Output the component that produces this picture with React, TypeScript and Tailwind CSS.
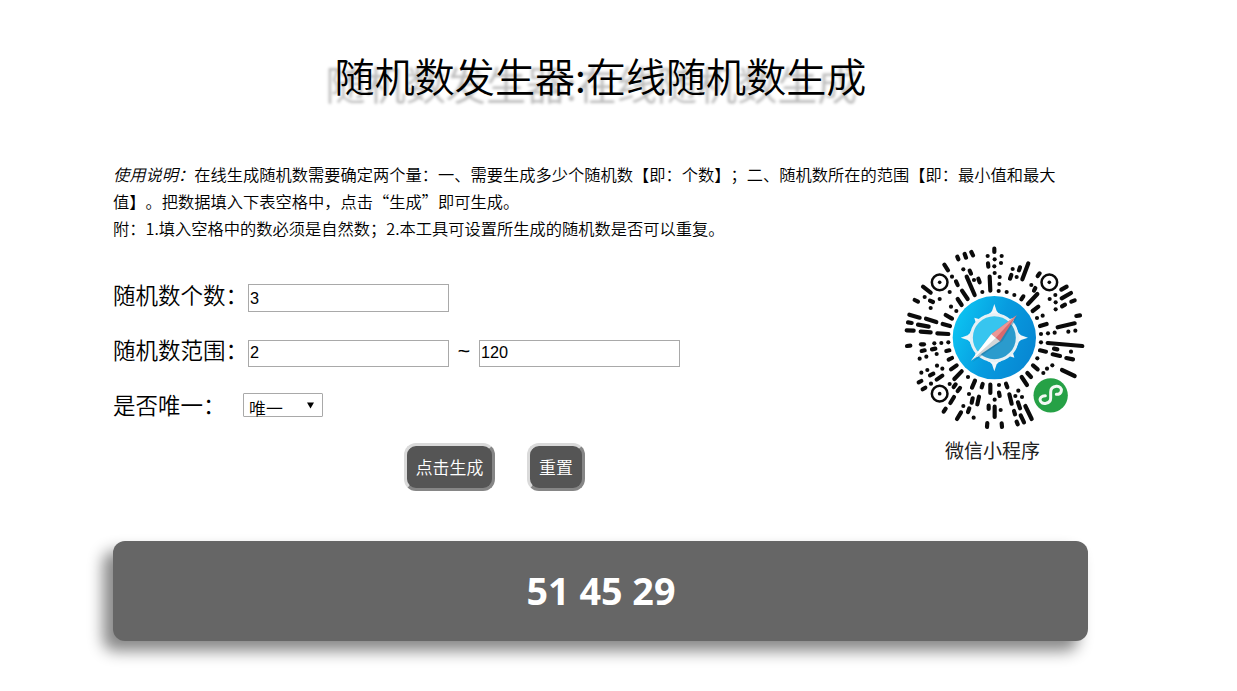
type Seg = [number, number, number, number];
type Dot = [number, number];

interface Quadrant {
  dx: number;
  dy: number;
  segs: Seg[];
  dots: Dot[];
}

const quadrants: Quadrant[] = [
  {
    dx: 15,
    dy: 0,
    segs: [
      [172, 50, 175, 58], [194, 42, 198, 53], [214, 36, 219, 46], [133, 74, 144, 91],
      [168, 124, 173, 135], [209, 92, 213, 101], [200, 110, 224, 165], [235, 116, 239, 127],
      [173, 177, 185, 195], [186, 152, 203, 177], [269, 110, 271, 152], [264, 70, 265, 80],
      [69, 140, 92, 158], [44, 180, 54, 185], [90, 182, 99, 186], [137, 225, 156, 236],
      [128, 252, 150, 258], [28, 224, 59, 233], [78, 236, 109, 246], [24, 247, 35, 249],
      [54, 254, 86, 260], [20, 271, 41, 272], [62, 275, 92, 277], [112, 280, 145, 282],
    ],
    dots: [
      [156, 110], [190, 88], [222, 120], [149, 156], [247, 156], [263, 48], [74, 171],
      [119, 177], [92, 204], [153, 200], [169, 213],
    ],
  },
  {
    dx: 285,
    dy: 0,
    segs: [
      [13, 26, 13, 36], [90, 82, 87, 91], [115, 70, 97, 118], [64, 105, 60, 116],
      [149, 100, 143, 108], [136, 144, 132, 152], [100, 169, 94, 178], [142, 162, 114, 192],
      [145, 200, 128, 213], [170, 252, 150, 258], [254, 250, 203, 262], [259, 228, 270, 226],
      [214, 149, 230, 140], [215, 175, 243, 159], [216, 199, 225, 194], [244, 185, 254, 181],
    ],
    dots: [
      [35, 48], [33, 69], [14, 58], [13, 79], [14, 99], [29, 111], [28, 132], [26, 153],
      [50, 156], [73, 165], [68, 87], [80, 111], [124, 135], [158, 227], [141, 234],
      [235, 275], [256, 272], [153, 282], [174, 280], [194, 278], [179, 177], [196, 165],
      [197, 187], [197, 208],
    ],
  },
  {
    dx: 15,
    dy: 285,
    segs: [
      [21, 33, 31, 32], [63, 28, 72, 28], [65, 48, 74, 46], [96, 43, 106, 41],
      [139, 48, 148, 46], [146, 74, 156, 69], [90, 121, 100, 116], [110, 134, 127, 122],
      [153, 103, 170, 91], [163, 132, 185, 109], [56, 142, 64, 138], [68, 163, 76, 158],
      [161, 156, 167, 148], [173, 168, 180, 159], [151, 204, 162, 186], [137, 221, 131, 230],
      [183, 232, 171, 252], [216, 158, 225, 137], [248, 147, 245, 157], [271, 149, 271, 174],
      [218, 190, 215, 203], [237, 185, 232, 208], [208, 220, 204, 231], [266, 212, 266, 222],
      [262, 264, 261, 276],
    ],
    dots: [
      [103, 25], [124, 24], [145, 22], [110, 57], [59, 71], [79, 65], [64, 113], [82, 105],
      [111, 92], [127, 101], [93, 146], [149, 147], [204, 126], [190, 213], [207, 177],
      [221, 248],
    ],
  },
  {
    dx: 285,
    dy: 285,
    segs: [
      [173, 24, 277, 33], [150, 46, 168, 50], [192, 41, 202, 43], [188, 58, 210, 63],
      [229, 69, 249, 73], [129, 91, 143, 103], [216, 105, 254, 123], [112, 114, 123, 126],
      [95, 126, 111, 150], [48, 146, 52, 157], [58, 178, 65, 206], [27, 173, 29, 183],
      [14, 215, 14, 246], [84, 202, 90, 220], [106, 213, 125, 252], [72, 228, 75, 238],
      [92, 241, 102, 262], [80, 260, 83, 268], [35, 265, 36, 276],
    ],
    dots: [
      [153, 22], [243, 50], [142, 70], [187, 91], [171, 101], [160, 114], [27, 150],
      [85, 167], [96, 186], [76, 183], [14, 194], [32, 225],
    ],
  },
];

const rings: Dot[] = [[134, 127], [463, 127], [134, 461]];
const rimAngles = [0, 90, 180, 270];
const diagonalAngles = [45, 135, 225, 315];

function MiniProgramCode() {
  return (
    <svg className="block h-[192px] w-[193px]" viewBox="0 9 579 576">
      <defs>
        <linearGradient id="sky" x1="0" y1="0.3" x2="1" y2="0.7">
          <stop offset="0" stopColor="#0cc4f2" />
          <stop offset="0.5" stopColor="#079bdf" />
          <stop offset="1" stopColor="#0786d2" />
        </linearGradient>
        <linearGradient id="dial" x1="0" y1="0" x2="1" y2="1">
          <stop offset="0.46" stopColor="#37c5ef" />
          <stop offset="0.54" stopColor="#2b9bcd" />
        </linearGradient>
      </defs>
      {quadrants.map((q, i) => (
        <g key={i} transform={`translate(${q.dx} ${q.dy})`} stroke="#0b0b0b" strokeWidth="12.5" strokeLinecap="round">
          {q.segs.map(([x1, y1, x2, y2], k) => (
            <line key={k} x1={x1} y1={y1} x2={x2} y2={y2} />
          ))}
          {q.dots.map(([cx, cy], k) => (
            <circle key={k} cx={cx} cy={cy} r="6.2" fill="#0b0b0b" stroke="none" />
          ))}
        </g>
      ))}
      {rings.map(([cx, cy]) => (
        <g key={`${cx}-${cy}`}>
          <circle cx={cx} cy={cy} r="23.5" fill="none" stroke="#0b0b0b" strokeWidth="7.5" />
          <circle cx={cx} cy={cy} r="5.5" fill="#0b0b0b" />
        </g>
      ))}
      <circle cx="298" cy="293" r="125" fill="url(#sky)" />
      <g fill="#f1f6f9">
        {rimAngles.map((a) => (
          <path key={a} d="M298 192L305 213Q309 221 321 224L275 224Q287 221 291 213Z" transform={`rotate(${a} 298 293)`} />
        ))}
        {diagonalAngles.map((a) => (
          <path key={a} d="M298 208L309 228L287 228Z" transform={`rotate(${a} 298 293)`} />
        ))}
      </g>
      <circle cx="298" cy="293" r="69" fill="url(#dial)" stroke="#e6f0f5" strokeWidth="9" />
      <path d="M367 230L323 303L232 367Z" fill="#1f6f96" opacity="0.45" />
      <path d="M365 226L315 304L289 283Z" fill="#d9696d" />
      <path d="M365 226L302 294L289 283Z" fill="#ec9896" />
      <path d="M228 362L289 283L315 304Z" fill="#d3d6d8" />
      <path d="M228 362L289 283L302 294Z" fill="#ffffff" />
      <circle cx="467" cy="466" r="51.5" fill="#26a146" />
      <path
        d="M451 467C438 467 435 475 435 479C436 488 445 492 453 490C463 488 467 481 467 474L467 456C467 446 474 440 484 439C494 438 500 445 499 452C498 460 491 463 484 463"
        fill="none"
        stroke="#f4f8f4"
        strokeWidth="9"
        strokeLinecap="round"
      />
    </svg>
  );
}

const inputClass =
  "box-border w-[201px] border border-[#a9a9a9] bg-white px-px text-[16.25px] leading-none text-black outline-none font-['Liberation_Sans','Noto_Sans_CJK_SC',sans-serif]";
const labelClass = "-mt-[2px] text-[22.5px] leading-[32px]";
const buttonClass =
  "h-12 rounded-[12px] border-[3px] border-t-[#dadada] border-l-[#dadada] border-r-[#868686] border-b-[#868686] bg-[#555] text-[16.9px] leading-none text-white";

export default function App() {
  return (
    <main className="ml-[113px] h-[691px] w-[975px] bg-white font-['Noto_Sans_CJK_SC',sans-serif] font-[350] text-black [text-spacing-trim:space-all]" lang="zh-CN">
      <h1 className="h-[161px] pt-[45px] text-center text-[40.1px] leading-[60px] font-[350] whitespace-nowrap [text-shadow:-9px_8px_3px_#bbb]">
        随机数发生器:在线随机数生成
      </h1>
      <p className="h-[82px] text-[16.25px] leading-[27px] whitespace-nowrap">
        <em>使用说明：</em>在线生成随机数需要确定两个量：一、需要生成多少个随机数【即：个数】；二、随机数所在的范围【即：最小值和最大
        <br />
        值】。把数据填入下表空格中，点击“生成”即可生成。
        <br />
        附：1.填入空格中的数必须是自然数；2.本工具可设置所生成的随机数是否可以重复。
      </p>
      <div className="flex h-[298px] justify-between">
        <form className="w-[763px] pt-[37px]" onSubmit={(e) => e.preventDefault()}>
          <div className="flex h-[55px] items-start">
            <label className={`${labelClass} w-[135px]`}>随机数个数：</label>
            <input className={`${inputClass} mt-1 h-7`} defaultValue="3" />
          </div>
          <div className="flex h-[55px] items-start">
            <label className={`${labelClass} w-[135px]`}>随机数范围：</label>
            <input className={`${inputClass} mt-[5px] h-[27px] pb-[2px]`} defaultValue="2" />
            <span className="w-[30px] text-center font-['Open_Sans',sans-serif] text-[22.5px] leading-[32px] font-normal">~</span>
            <input className={`${inputClass} mt-[5px] h-[27px] pb-[2px]`} defaultValue="120" />
          </div>
          <div className="flex h-[53px] items-start">
            <label className={`${labelClass} w-[130px]`}>是否唯一：</label>
            <div className="mt-[3px] flex h-6 w-20 items-center justify-between rounded-[1px] border border-[#a9a9a9] pr-2 pl-[5px]">
              <span className="pt-[5px] text-[16.9px] leading-5">唯一</span>
              <svg className="h-[7px] w-[7px]" viewBox="0 0 8 7">
                <path d="M0 0H8L4 7Z" />
              </svg>
            </div>
          </div>
          <div className="flex gap-8 pl-[291px]">
            <button className={`${buttonClass} w-[91px]`}>点击生成</button>
            <button className={`${buttonClass} w-[58px]`}>重置</button>
          </div>
        </form>
        <figure className="w-[193px]">
          <MiniProgramCode />
          <figcaption className="pl-[2px] text-center text-[19px] leading-[30px] font-normal text-[#222]">微信小程序</figcaption>
        </figure>
      </div>
      <div className="flex h-[100px] items-center justify-center rounded-[12px] bg-[#666] pl-px font-['Open_Sans','Noto_Sans',sans-serif] text-[37.7px] leading-none font-bold text-white shadow-[-10px_10px_15px_#888]">
        51 45 29
      </div>
    </main>
  );
}
